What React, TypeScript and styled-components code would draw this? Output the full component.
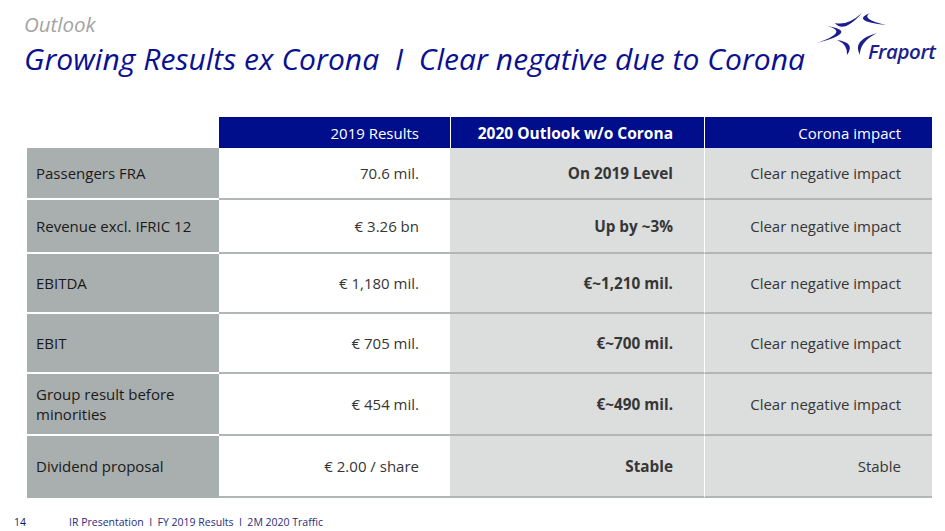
import React from "react";
import styled, { createGlobalStyle } from "styled-components";

const GlobalStyle = createGlobalStyle`
  html, body { margin: 0; padding: 0; background: #ffffff; }
  body { font-family: "Open Sans", "Noto Sans", sans-serif; }
  * { box-sizing: border-box; }
`;

const Page = styled.div`
  width: 945px;
  height: 531px;
  background: #ffffff;
  display: flex;
  flex-direction: column;
  overflow: hidden;
`;

const Header = styled.header`
  display: flex;
  justify-content: space-between;
  align-items: flex-start;
  padding: 12px 10px 0 24px;
  height: 117px;
`;

const Titles = styled.div`
  display: flex;
  flex-direction: column;
`;

const Kicker = styled.div`
  font-style: italic;
  font-size: 20.5px;
  line-height: 24px;
  color: #a3a3a3;
`;

const Title = styled.h1`
  margin: 6px 0 0 0;
  font-weight: 400;
  font-style: italic;
  font-size: 30px;
  line-height: 34px;
  color: #0b1090;
  letter-spacing: 0.05px;
  white-space: pre;
`;

const Logo = styled.div`
  position: relative;
  width: 125px;
  height: 56px;
  margin-top: -2px;
`;

const LogoMark = styled.svg`
  position: absolute;
  left: 0;
  top: 0;
`;

const LogoWord = styled.span`
  position: absolute;
  left: 58px;
  top: 29px;
  font-family: "Open Sans", sans-serif;
  font-style: italic;
  font-weight: 600;
  font-size: 20.5px;
  line-height: 24px;
  color: #1c1e8e;
  letter-spacing: -0.4px;
`;

const Table = styled.div`
  margin-left: 27px;
  width: 905px;
  display: grid;
  grid-template-columns: 192px 231px 254px 228px;
  grid-template-rows: 31px 52px 54px 60px 60px 62px 62px;
`;

type Kind = "label" | "value" | "outlook" | "impact";

const HeadCell = styled.div<{ $bold?: boolean; $empty?: boolean; $divider?: boolean }>`
  background: ${(p) => (p.$empty ? "transparent" : "#000e8c")};
  color: #ffffff;
  font-size: ${(p) => (p.$bold ? "15.5px" : "15px")};
  font-weight: ${(p) => (p.$bold ? 700 : 400)};
  display: flex;
  align-items: center;
  justify-content: flex-end;
  padding-right: 31px;
  border-left: ${(p) => (p.$divider ? "1px solid #ffffff" : "none")};
`;

const Cell = styled.div<{ $kind: Kind; $last?: boolean }>`
  display: flex;
  align-items: center;
  font-size: ${(p) => (p.$kind === "outlook" ? "15.3px" : "15px")};
  line-height: 20px;
  color: ${(p) => (p.$kind === "label" ? "#1a1a1a" : "#363636")};
  font-weight: ${(p) => (p.$kind === "outlook" ? 700 : 400)};
  justify-content: ${(p) => (p.$kind === "label" ? "flex-start" : "flex-end")};
  padding: ${(p) => (p.$kind === "label" ? "0 0 0 9px" : "0 31px 0 0")};
  background: ${(p) =>
    p.$kind === "label" ? "#a9aeae" : p.$kind === "value" ? "#ffffff" : "#dcdddd"};
  border-bottom: 2px solid
    ${(p) => (p.$kind === "label" ? (p.$last ? "#a9aeae" : "#ffffff") : "#b3b6b6")};
  border-left: ${(p) => (p.$kind === "impact" ? "1px solid #ffffff" : "none")};
`;

const Footer = styled.footer`
  margin-top: auto;
  display: flex;
  align-items: baseline;
  padding: 0 0 2px 14px;
  font-size: 10.5px;
  line-height: 14px;
  color: #2b2b7a;
  white-space: pre;
`;

const PageNo = styled.span`
  width: 55px;
  color: #1a1a66;
`;

const rows: { label: React.ReactNode; value: string; outlook: string; impact: string }[] = [
  { label: "Passengers FRA", value: "70.6 mil.", outlook: "On 2019 Level", impact: "Clear negative impact" },
  { label: "Revenue excl. IFRIC 12", value: "€ 3.26 bn", outlook: "Up by ~3%", impact: "Clear negative impact" },
  { label: "EBITDA", value: "€ 1,180 mil.", outlook: "€~1,210 mil.", impact: "Clear negative impact" },
  { label: "EBIT", value: "€ 705 mil.", outlook: "€~700 mil.", impact: "Clear negative impact" },
  {
    label: (
      <>
        Group result before
        <br />
        minorities
      </>
    ),
    value: "€ 454 mil.",
    outlook: "€~490 mil.",
    impact: "Clear negative impact",
  },
  { label: "Dividend proposal", value: "€ 2.00 / share", outlook: "Stable", impact: "Stable" },
];

function crescent(p0: number[], p2: number[], c1: number[], c2: number[]) {
  return `M${p0[0]} ${p0[1]} Q${c1[0]} ${c1[1]} ${p2[0]} ${p2[1]} Q${c2[0]} ${c2[1]} ${p0[0]} ${p0[1]} Z`;
}

const FraportLogo = () => (
  <Logo>
    <LogoMark width="80" height="50" viewBox="0 0 80 50">
      <g fill="#1c1e8e">
        <path d={crescent([25, 13], [52, 3], [33.5, 24], [37.5, 16])} />
        <path d={crescent([60, 3], [76, 15], [40, 11], [50, 9])} />
        <path d={crescent([17, 16], [7, 33], [50, 21.5], [40, 21.5])} />
        <path d={crescent([27, 30], [37, 45], [46, 32.5], [38, 34.5])} />
        <path d={crescent([67, 23], [50, 45], [41.5, 30], [49.5, 32])} />
      </g>
    </LogoMark>
    <LogoWord>Fraport</LogoWord>
  </Logo>
);

export default function App() {
  return (
    <Page>
      <GlobalStyle />
      <Header>
        <Titles>
          <Kicker>Outlook</Kicker>
          <Title>{"Growing Results ex Corona  I  Clear negative due to Corona"}</Title>
        </Titles>
        <FraportLogo />
      </Header>
      <Table>
        <HeadCell $empty />
        <HeadCell>2019 Results</HeadCell>
        <HeadCell $bold $divider>
          2020 Outlook w/o Corona
        </HeadCell>
        <HeadCell $divider>Corona impact</HeadCell>
        {rows.map((r, i) => {
          const last = i === rows.length - 1;
          return (
            <React.Fragment key={i}>
              <Cell $kind="label" $last={last}>
                <span>{r.label}</span>
              </Cell>
              <Cell $kind="value">{r.value}</Cell>
              <Cell $kind="outlook">{r.outlook}</Cell>
              <Cell $kind="impact">{r.impact}</Cell>
            </React.Fragment>
          );
        })}
      </Table>
      <Footer>
        <PageNo>14</PageNo>
        <span>{"IR Presentation  I  FY 2019 Results  I  2M 2020 Traffic"}</span>
      </Footer>
    </Page>
  );
}
